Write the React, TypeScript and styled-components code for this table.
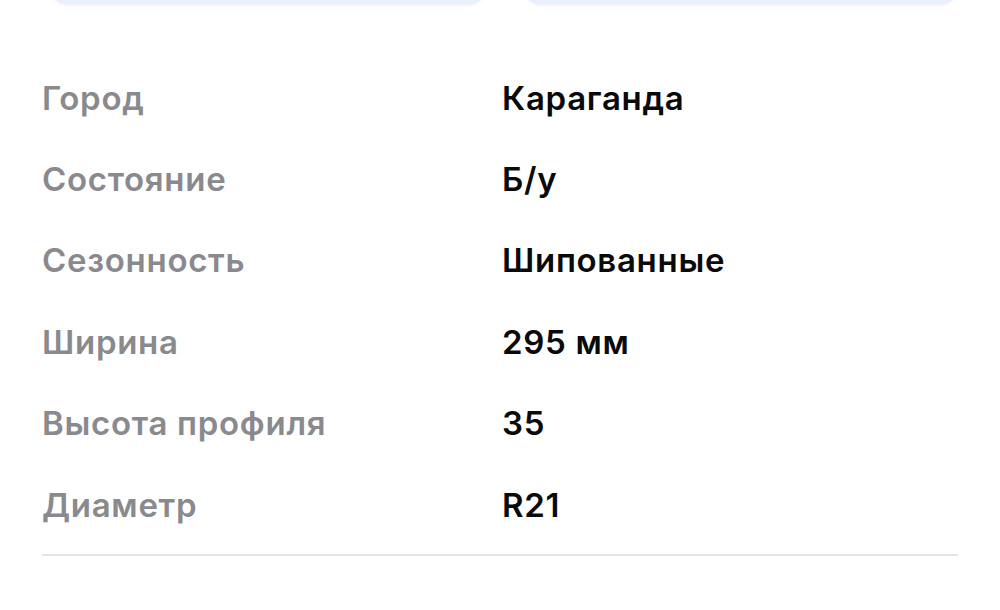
import React from 'react';
import styled, { createGlobalStyle } from 'styled-components';

const GlobalStyle = createGlobalStyle`
    html, body {
        margin: 0;
        padding: 0;
        background: #ffffff;
        overflow: hidden;
    }
    body {
        font-family: "Inter", "Liberation Sans", Arial, sans-serif;
    }
`;

interface Spec {
    label: string;
    value: string;
}

const specs: Spec[] = [
    { label: 'Город', value: 'Караганда' },
    { label: 'Состояние', value: 'Б/у' },
    { label: 'Сезонность', value: 'Шипованные' },
    { label: 'Ширина', value: '295 мм' },
    { label: 'Высота профиля', value: '35' },
    { label: 'Диаметр', value: 'R21' },
];

const App: React.FC = () => {
    return (
        <Page>
            <GlobalStyle />
            <ButtonRow>
                <PillButton />
                <PillButton />
            </ButtonRow>
            <SpecList>
                {specs.map((s) => (
                    <SpecRow key={s.label}>
                        <Label>{s.label}</Label>
                        <Value>{s.value}</Value>
                    </SpecRow>
                ))}
            </SpecList>
            <Divider />
        </Page>
    );
};

export default App;

const Page = styled.div`
    width: 1000px;
    height: 610px;
    box-sizing: border-box;
    padding: 0 42px;
    overflow: hidden;
`;

const ButtonRow = styled.div`
    display: grid;
    grid-template-columns: 1fr 1fr;
    gap: 37px;
    margin: -44px 0 0 8px;
`;

const PillButton = styled.div`
    height: 48px;
    border-radius: 18px;
    background: #e8f0fb;
    box-shadow: 0 1px 3px rgba(120, 140, 170, 0.18);
`;

const SpecList = styled.div`
    display: flex;
    flex-direction: column;
    margin-top: 53px;
`;

const SpecRow = styled.div`
    display: grid;
    grid-template-columns: 460px 1fr;
    align-items: center;
    height: 81.4px;
    font-size: 33px;
    letter-spacing: 0.7px;
`;

const Label = styled.span`
    color: #8a8a8e;
    font-weight: 600;
`;

const Value = styled.span`
    color: #0a0a0a;
    font-weight: 600;
`;

const Divider = styled.div`
    height: 2px;
    background: #e4e4e6;
    margin-top: 9px;
`;
